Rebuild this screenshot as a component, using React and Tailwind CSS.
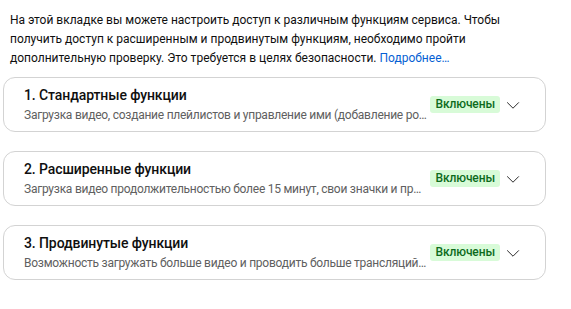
import React from "react";

const features = [
  {
    title: "1. Стандартные функции",
    desc: "Загрузка видео, создание плейлистов и управление ими (добавление роликов, изменение порядка)",
  },
  {
    title: "2. Расширенные функции",
    desc: "Загрузка видео продолжительностью более 15 минут, свои значки и прямые трансляции",
  },
  {
    title: "3. Продвинутые функции",
    desc: "Возможность загружать больше видео и проводить больше трансляций в день",
  },
];

function Chevron() {
  return (
    <svg width="14" height="14" viewBox="0 0 24 24" className="text-[#0f0f0f]">
      <path d="M2 7.5 12 17.5 22 7.5" fill="none" stroke="currentColor" strokeWidth="1.5" />
    </svg>
  );
}

export default function App() {
  return (
    <div className="w-[571px] h-[309px] bg-white font-['Roboto',sans-serif] text-[#0f0f0f]">
      {/* Intro */}
      <p className="pl-[10px] w-[520px] pt-[11px] text-[12px] leading-[19px]">
        На этой вкладке вы можете настроить доступ к различным функциям сервиса. Чтобы
        получить доступ к расширенным и продвинутым функциям, необходимо пройти
        дополнительную проверку. Это требуется в целях безопасности.{" "}
        <a href="#" className="text-[#065fd4]">Подробнее…</a>
      </p>

      {/* Feature cards */}
      <div className="mt-[9px] ml-[3px] w-[543px] flex flex-col gap-[19px]">
        {features.map((f) => (
          <div
            key={f.title}
            className="h-[55px] rounded-[12px] border border-[#d3d3d3] flex items-center pl-[20px] pr-[25px]"
          >
            <div className="flex-1 min-w-0 pr-[3px]">
              <div className="text-[14px] leading-[20px] font-medium tracking-[-0.1px]">{f.title}</div>
              <div className="mt-[1px] text-[12px] leading-[18px] text-[#606060] tracking-[-0.25px] truncate">
                {f.desc}
              </div>
            </div>
            <span className="h-[17px] px-[5px] rounded-[3px] bg-[#d8fbd8] text-[#0d6b1c] text-[12px] font-medium leading-[17px] tracking-[-0.1px]">
              Включены
            </span>
            <span className="ml-[6px] flex items-center">
              <Chevron />
            </span>
          </div>
        ))}
      </div>
    </div>
  );
}
